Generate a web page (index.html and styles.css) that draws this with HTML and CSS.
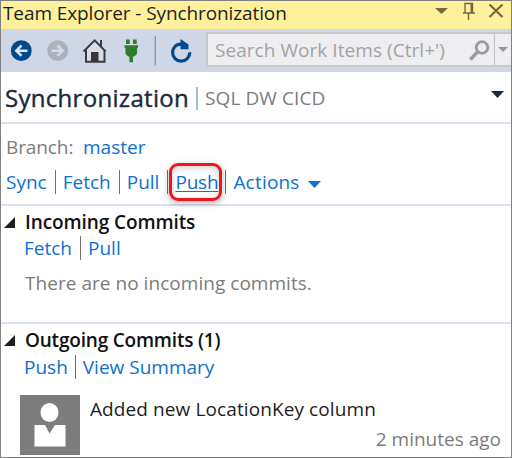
FILE: index.html
```html
<!DOCTYPE html>
<html lang="en">
<head>
<meta charset="utf-8">
<title>Team Explorer - Synchronization</title>
<link rel="stylesheet" href="styles.css">
</head>
<body>
<main class="panel">
  <header class="titlebar">
    <span class="title">Team Explorer - Synchronization</span>
    <svg class="window-tools" width="76" height="22" viewBox="435 0 76 22" fill="none" stroke="#79663a">
      <path d="M435 8h13l-6.500 6z" fill="#79663a" stroke="none"/>
      <path d="M465 13V3.500h7.500V13M463 13h12M468.500 13v7" stroke-width="1.400"/>
      <path d="M471.500 3v10" stroke-width="2"/>
      <path d="M489.500 4.500l13 12.500M502.500 4.500l-13 12.500" stroke-width="2.200"/>
    </svg>
  </header>
  <nav class="toolbar">
    <svg class="tools" width="205" height="43" viewBox="1 29 205 43" fill="none">
      <circle cx="21.300" cy="50.700" r="10.400" fill="#00498c"/>
      <path d="M27.500 50.700H17M21.500 45.500l-5.200 5.200 5.200 5.200" stroke="#dfe6f2" stroke-width="2.500"/>
      <circle cx="57.700" cy="50.700" r="10.400" fill="#acb1bc"/>
      <path d="M51.500 50.700H62M57.500 45.500l5.200 5.200-5.200 5.200" stroke="#d6dbe6" stroke-width="2.500"/>
      <path d="M86 50v11.700h18.500V50L95 41z" fill="#d9dde8"/>
      <path d="M83.500 51.500L94.700 40.300l11 11.200M86 49.500v12.200h18.500V49.500M101 46v-6" stroke="#3c3c3e" stroke-width="2"/>
      <path d="M91 52h7.500v10H91z" fill="#38383a"/>
      <path d="M126 39.500h3.700V44H126zM133 39.500h3.700V44H133zM124.500 45.300h13.500v2.400h-1v6.300l-2.800 2.500h-1.200V62.300h-3.600v-5.800h-1.200l-2.700-2.500v-6.300h-1z" fill="#2f7d2b"/>
      <path d="M155.300 36v29.500" stroke="#8d98ae" stroke-width="1.400"/>
      <path d="M181 44.200c-5.500 0-8.400 4-8.400 8.300 0 4.800 3.700 8.600 8.500 8.600 4.900 0 8.700-3.700 8.700-8.900" stroke="#00498c" stroke-width="3.200"/>
      <path d="M180.500 39l8 5.500v4.700h-8z" fill="#00498c"/>
    </svg>
    <div class="search">
      <span class="placeholder">Search Work Items (Ctrl+')</span>
      <svg class="magnifier" width="24" height="24" viewBox="0 0 24 24" fill="none" stroke="#9b9b9e">
        <circle cx="15" cy="8.500" r="5.800" stroke-width="2.800"/>
        <path d="M10.800 12.700L3.300 20.500" stroke-width="3.600"/>
      </svg>
      <span class="drop"><svg width="10" height="5" viewBox="0 0 10 5"><path d="M0 0h10L5 5z" fill="#97979a"/></svg></span>
    </div>
  </nav>
  <div class="heading">
    <h1>Synchronization</h1>
    <i class="bar"></i>
    <span class="project">SQL DW CICD</span>
    <svg class="caret" width="13" height="7" viewBox="0 0 13 7"><path d="M0 0h13L6.500 7z" fill="#1b293e"/></svg>
  </div>
  <section class="branch">
    <div class="row"><span class="label">Branch:</span><a class="master">master</a></div>
    <div class="row links">
      <a>Sync</a><i class="sep"></i><a>Fetch</a><i class="sep"></i><a>Pull</a><i class="sep"></i><a class="push">Push</a><i class="sep"></i><a class="actions">Actions</a>
      <svg class="blue-caret" width="13" height="7" viewBox="0 0 13 7"><path d="M0 0h13L6.500 7z" fill="#0e70cf"/></svg>
    </div>
  </section>
  <section class="incoming">
    <h2><svg class="expander" width="11" height="11" viewBox="0 0 11 11"><path d="M11 0v11H0z" fill="#1e1e1e"/></svg>Incoming Commits</h2>
    <div class="row links"><a>Fetch</a><i class="sep"></i><a>Pull</a></div>
    <p class="empty">There are no incoming commits.</p>
  </section>
  <section class="outgoing">
    <h2><svg class="expander" width="11" height="11" viewBox="0 0 11 11"><path d="M11 0v11H0z" fill="#1e1e1e"/></svg>Outgoing Commits (1)</h2>
    <div class="row links"><a>Push</a><i class="sep"></i><a class="view">View Summary</a></div>
    <div class="commit">
      <svg width="60" height="60" viewBox="0 0 60 60">
        <path d="M0 0h60v60H0z" fill="#7d7d7d"/>
        <ellipse cx="29.500" cy="17.500" rx="9" ry="9.500" fill="#fff"/>
        <path d="M14.500 30H25l4.500 8.500L35 30h10.500v21.500h-31z" fill="#fff"/>
      </svg>
      <div class="info">
        <span class="message">Added new LocationKey column</span>
        <span class="time">2 minutes ago</span>
      </div>
    </div>
  </section>
</main>
</body>
</html>
```
FILE: styles.css
```css
*, *::after { box-sizing: border-box; }
body { margin: 0; background: #fff; }
.panel {
  width: 512px;
  height: 458px;
  border: 1px solid #808080;
  font: 19px/24px "Open Sans", "Noto Sans", sans-serif;
  color: #1e1e1e;
  overflow: hidden;
  white-space: nowrap;
}
h1, h2, p { margin: 0; font-size: 19px; font-weight: 400; }
svg { display: block; flex: none; }

.titlebar {
  display: flex;
  justify-content: space-between;
  height: 28px;
  padding-left: 2px;
  background: #fff09c;
}
.title { line-height: 24px; letter-spacing: -0.1px; }
.window-tools { margin-top: -1px; }

.toolbar { display: flex; height: 43px; background: #cfd6e5; }
.search {
  display: flex;
  flex: 1;
  height: 35px;
  margin-top: 3px;
  border: 2px solid #c6c8ce;
  border-right: 0;
  background: #eeeef0;
  color: #a2a2a5;
}
.placeholder { width: 260px; padding: 4px 0 0 7px; letter-spacing: 0.05px; }
.magnifier { margin: 5px 0 0 -1px; }
.drop {
  display: flex;
  flex: 1;
  align-items: center;
  justify-content: center;
  margin-left: 3px;
  border-left: 1px solid #bfc1c7;
}

.heading {
  display: flex;
  align-items: center;
  height: 52px;
  padding: 1px 7px 0 4px;
  border-bottom: 2px solid #dde0ee;
}
h1 { font-size: 24px; letter-spacing: 0.3px; color: #1b293e; -webkit-text-stroke: 0.4px #1b293e; }
.bar { width: 2px; height: 23px; margin: 2px 7px 0 7px; background: #a3bdd0; }
.project { margin-top: 1px; letter-spacing: 0.1px; color: #7c7c7c; }
.caret { margin: -6px 0 0 auto; }

.branch { height: 82px; padding: 11px 0 0 5px; border-bottom: 2px solid #dde0ee; }
.row { display: flex; height: 24px; }
.label { width: 77px; letter-spacing: -0.1px; color: #7c7c7c; }
a { color: #0e70cf; }
.branch .links { margin-top: 11px; }
.sep { width: 1px; margin: 0 7px 0 8px; background: #707070; }
.push {
  position: relative;
  letter-spacing: -0.2px;
  text-decoration: underline;
  text-decoration-thickness: 1px;
  text-underline-offset: 2px;
}
.push::after {
  content: "";
  position: absolute;
  left: -6px;
  top: -7px;
  width: 53px;
  height: 38px;
  border: 3px solid #ef151b;
  border-radius: 9px;
  box-shadow: 0 2px 7px rgba(0, 0, 0, 0.3), inset 0 2px 6px rgba(0, 0, 0, 0.2);
}
.push + .sep { margin: 0 7px; }
.actions { letter-spacing: 0.2px; }
.blue-caret { margin: 11px 0 0 8px; }

.incoming { height: 118px; padding: 4px 0 0 24px; border-bottom: 2px solid #dde0ee; }
h2 { position: relative; font-weight: 600; color: #111; letter-spacing: -0.1px; }
.outgoing h2 { letter-spacing: -0.2px; }
.expander { position: absolute; left: -21px; top: 7px; }
.incoming .links, .outgoing .links { margin: 2px 0 0 -1px; }
.empty { margin-top: 11px; letter-spacing: 0.04px; color: #7c7c7c; }

.outgoing { padding: 4px 0 0 24px; }
.outgoing .links { margin-top: 3px; }
.outgoing .sep { margin: 0 6px 0 7px; }
.view { margin-left: 1px; }
.commit { display: flex; margin: 16px 0 0 -5px; }
.info { display: flex; flex: 1; flex-direction: column; padding: 2px 10px 0 10px; }
.message { letter-spacing: 0.1px; }
.time { align-self: flex-end; margin-top: 6px; color: #7c7c7c; }
```
